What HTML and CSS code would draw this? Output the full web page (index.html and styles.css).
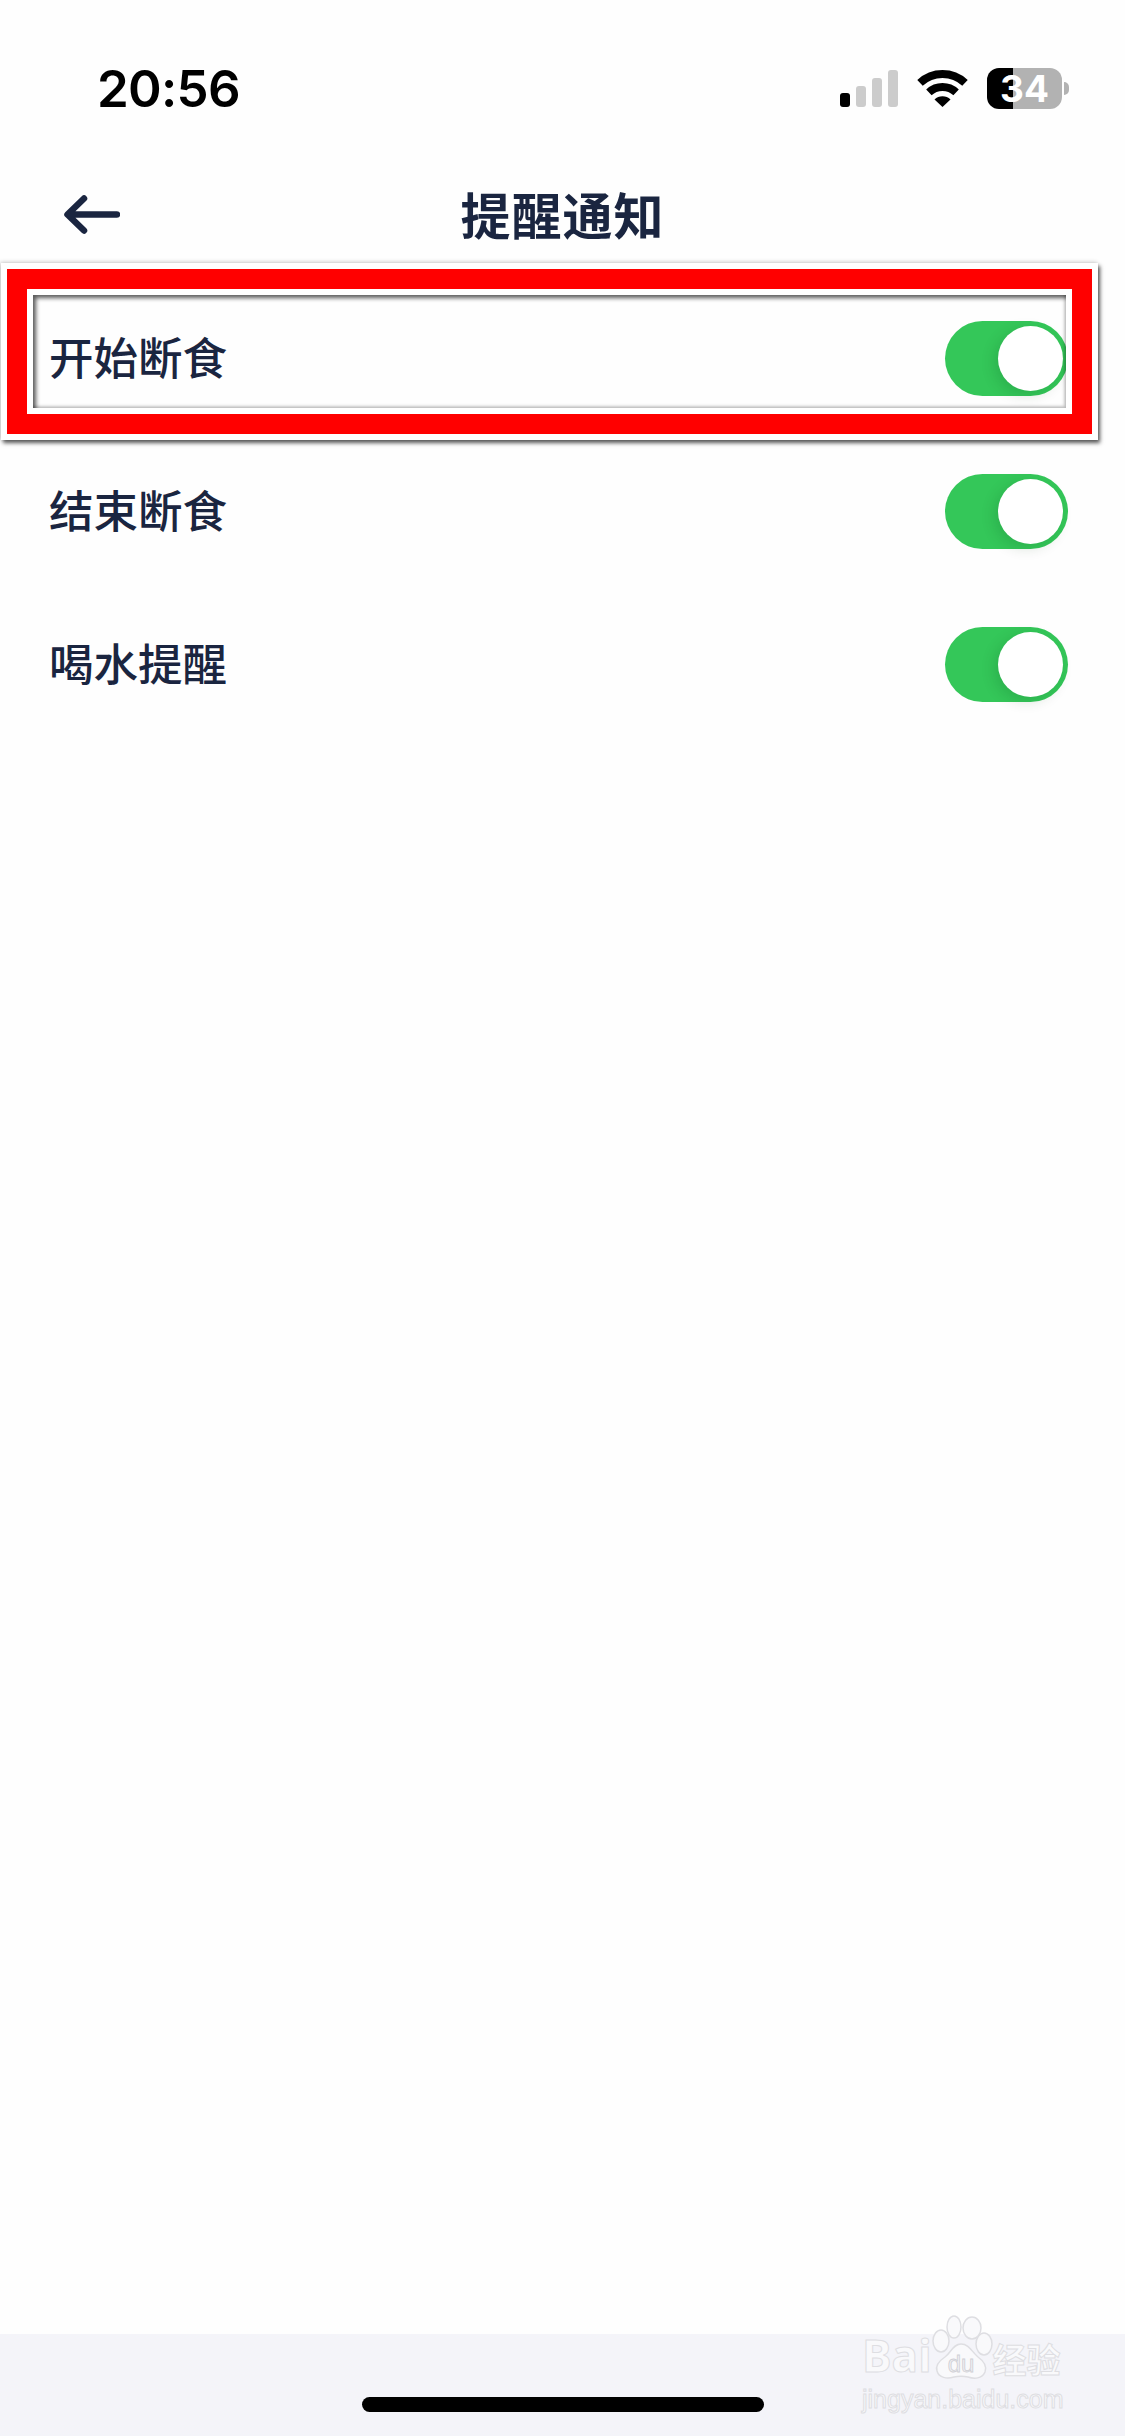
FILE: index.html
```html
<!DOCTYPE html>
<html lang="zh">
<head>
    <meta charset="UTF-8">
    <title>提醒通知</title>
    <link rel="stylesheet" href="styles.css">
</head>
<body>
    <div class="page">
        <div class="status-bar">
            <span class="time">20:56</span>
            <div class="status-icons">
                <div class="signal">
                    <i class="bar bar-1 on"></i>
                    <i class="bar bar-2"></i>
                    <i class="bar bar-3"></i>
                    <i class="bar bar-4"></i>
                </div>
                <svg class="wifi" viewBox="0 0 51 37" width="51" height="37">
                    <path d="M3 12.9A33 33 0 0 1 48 12.9" fill="none" stroke="#000" stroke-width="8"/>
                    <path d="M11.9 22.4A20 20 0 0 1 39.1 22.4" fill="none" stroke="#000" stroke-width="8"/>
                    <path d="M25.5 37L17.5 29.5A11.5 11.5 0 0 1 33.5 29.5Z" fill="#000"/>
                </svg>
                <div class="battery"><span>34</span></div>
            </div>
        </div>

        <div class="nav">
            <svg class="back" viewBox="0 0 56 39" width="56" height="39">
                <path d="M53 19.5H4M20 3.5L3.5 19.5L20 35.5" fill="none" stroke="#1a2540" stroke-width="6.5" stroke-linecap="round" stroke-linejoin="round"/>
            </svg>
            <h1>提醒通知</h1>
        </div>

        <div class="list">
            <div class="row">
                <span class="label">开始断食</span>
                <div class="toggle"><i class="knob"></i></div>
            </div>
            <div class="row">
                <span class="label">结束断食</span>
                <div class="toggle"><i class="knob"></i></div>
            </div>
            <div class="row">
                <span class="label">喝水提醒</span>
                <div class="toggle"><i class="knob"></i></div>
            </div>
        </div>

        <div class="home-area">
            <div class="home-bar"></div>
        </div>

        <!-- red frame around the first row -->
        <div class="mark">
            <div class="mark-red">
                <div class="mark-inner"></div>
            </div>
        </div>

        <div class="stamp">
            <div class="stamp-logo">
                <span class="stamp-bai">Bai</span>
                <svg class="paw" viewBox="0 0 62 66" width="62" height="66">
                    <g fill="#f9f9fb" stroke="#dedee2" stroke-width="1.5">
                        <ellipse cx="10" cy="26" rx="8" ry="11"/>
                        <ellipse cx="23" cy="12" rx="7" ry="11"/>
                        <ellipse cx="41" cy="13" rx="9" ry="11"/>
                        <ellipse cx="53" cy="29" rx="8" ry="11"/>
                        <path d="M30 29C38 29 41 37 47 42C54 47 56 52 54 57C51 64 43 64 37 62C32 61 28 61 23 62C16 64 8 63 6 56C4 50 8 46 14 42C20 38 22 29 30 29Z"/>
                    </g>
                    <text x="30" y="57" class="paw-du">du</text>
                </svg>
                <span class="stamp-cn">经验</span>
            </div>
            <div class="stamp-url">jingyan.baidu.com</div>
        </div>
    </div>
</body>
</html>
```

FILE: styles.css
```css
html, body {
    margin: 0;
    padding: 0;
}

body {
    background-color: #fefefe;
    font-family: "Noto Sans CJK SC", "Noto Sans", sans-serif;
    color: #1a2540;
}

.page {
    position: relative;
    width: 1125px;
    height: 2436px;
    overflow: hidden;
    display: flex;
    flex-direction: column;
}

/* status bar */
.status-bar {
    height: 150px;
    box-sizing: border-box;
    padding: 68px 56px 42px 97px;
    display: flex;
    align-items: center;
    justify-content: space-between;
}

.time {
    font-family: Inter, "Liberation Sans", sans-serif;
    font-size: 51px;
    font-weight: 600;
    line-height: 40px;
    letter-spacing: -0.7px;
    margin-top: 2px;
    color: #000;
}

.status-icons {
    display: flex;
    align-items: center;
    gap: 19px;
    padding-right: 7px;
}

.signal {
    display: flex;
    align-items: flex-end;
    gap: 6px;
    height: 37px;
}

.bar {
    display: block;
    width: 10px;
    background-color: #cccccc;
    border-radius: 3px;
}

.bar.on {
    background-color: #000;
}

.bar-1 { height: 14px; }
.bar-2 { height: 21px; }
.bar-3 { height: 29px; }
.bar-4 { height: 37px; }

.battery {
    position: relative;
    width: 75px;
    height: 41px;
    border-radius: 12px;
    background: linear-gradient(to right, #000 26px, #b2b2b2 26px);
    display: flex;
    align-items: center;
    justify-content: center;
    font-family: Inter, "Liberation Sans", sans-serif;
    font-size: 37px;
    font-weight: 700;
    line-height: 41px;
    color: #fff;
}

.battery::after {
    content: "";
    position: absolute;
    left: 77px;
    top: 14px;
    width: 5px;
    height: 13px;
    background-color: #b2b2b2;
    border-radius: 0 7px 7px 0;
}

/* title row */
.nav {
    position: relative;
    height: 132px;
    box-sizing: border-box;
    padding-bottom: 7px;
    display: flex;
    align-items: center;
    justify-content: center;
}

.back {
    position: absolute;
    left: 64px;
    top: 45px;
}

.nav h1 {
    margin: 0;
    font-size: 50px;
    font-weight: 700;
    line-height: 70px;
    letter-spacing: 1px;
}

/* settings rows */
.list {
    flex: 1;
}

.row {
    height: 153px;
    box-sizing: border-box;
    padding: 0 57px 0 49px;
    display: flex;
    align-items: center;
    justify-content: space-between;
}

.label {
    font-size: 44.5px;
    font-weight: 500;
    line-height: 60px;
    margin-bottom: 5px;
}

.toggle {
    width: 123px;
    height: 75px;
    box-sizing: border-box;
    padding: 5px;
    border-radius: 38px;
    background-color: #34c759;
    display: flex;
    justify-content: flex-end;
}

.knob {
    display: block;
    width: 65px;
    height: 65px;
    border-radius: 50%;
    background-color: #fff;
    box-shadow: -4px 4px 14px rgba(0, 60, 20, 0.16);
}

/* bottom strip */
.home-area {
    height: 102px;
    background-color: #f4f4f9;
    box-sizing: border-box;
    padding-top: 63px;
}

.home-bar {
    width: 402px;
    height: 15px;
    margin: 0 auto;
    background-color: #000;
    border-radius: 8px;
}

/* highlight frame */
.mark {
    position: absolute;
    left: 1px;
    top: 263px;
    width: 1097px;
    height: 177px;
    box-sizing: border-box;
    border: 6px solid #fff;
    box-shadow: 2px 3px 4px rgba(0, 0, 0, 0.65), -1px -1px 4px rgba(0, 0, 0, 0.18);
}

.mark-red {
    height: 100%;
    box-sizing: border-box;
    border: 20px solid #ff0000;
}

.mark-inner {
    height: 100%;
    box-sizing: border-box;
    border: 6px solid #fff;
    box-shadow: inset 3px 3px 4px rgba(0, 0, 0, 0.65), inset -2px -2px 3px rgba(0, 0, 0, 0.22);
}

/* site stamp in the corner */
.stamp {
    position: absolute;
    left: 862px;
    top: 2315px;
    width: 210px;
    color: #f9f9fb;
    -webkit-text-stroke: 1px #dedee2;
    font-family: "Liberation Sans", sans-serif;
}

.stamp-logo {
    display: flex;
    align-items: flex-end;
    height: 66px;
}

.stamp-bai {
    font-family: "Open Sans", "Liberation Sans", sans-serif;
    font-size: 44px;
    font-weight: 700;
    line-height: 50px;
    margin-bottom: 1px;
}

.paw {
    flex: none;
    margin-left: -1px;
}

.paw-du {
    font-family: "Liberation Sans", sans-serif;
    font-size: 24px;
    text-anchor: middle;
    fill: #f0f0f3;
    stroke: #cfcfd4;
    stroke-width: 0.8px;
}

.stamp-cn {
    font-family: "Noto Sans CJK SC", sans-serif;
    font-size: 34px;
    font-weight: 700;
    line-height: 40px;
    margin-bottom: 2px;
    white-space: nowrap;
}

.stamp-url {
    font-size: 25px;
    line-height: 30px;
    margin-top: 3px;
    white-space: nowrap;
}
```
